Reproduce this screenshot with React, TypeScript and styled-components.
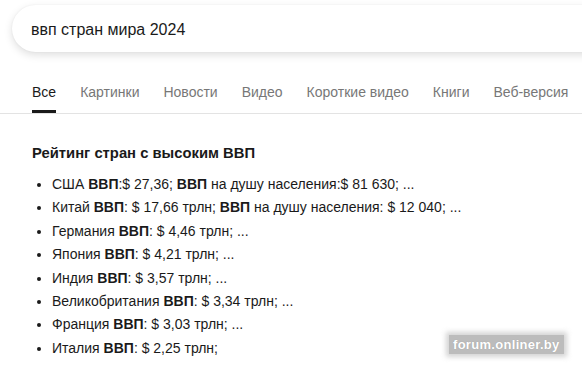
import React from 'react';
import styled, { createGlobalStyle } from 'styled-components';

const GlobalStyle = createGlobalStyle`
  html, body {
    margin: 0;
    padding: 0;
    background: #fff;
  }
  body {
    font-family: "Liberation Sans", Arial, sans-serif;
    color: #1a1a1a;
    overflow: hidden;
  }
`;

const Page = styled.div`
  position: relative;
  width: 582px;
  height: 366px;
  overflow: hidden;
  background: #fff;
`;

const SearchBar = styled.div`
  margin: 5px 0 0 12px;
  width: 640px;
  height: 47px;
  border-radius: 24px;
  background: #fff;
  box-shadow: 0 3px 8px rgba(0, 0, 0, 0.13), 0 0 2px rgba(0, 0, 0, 0.06);
  display: flex;
  align-items: center;
  padding: 3px 0 0 19px;
  box-sizing: border-box;
  font-size: 16px;
  color: #1a1a1a;
`;

const Tabs = styled.nav`
  margin-top: 27px;
  display: flex;
  gap: 24px;
  padding-left: 32px;
  border-bottom: 1px solid #e3e3e3;
`;

const Tab = styled.div<{ $active?: boolean }>`
  font-size: 14px;
  height: 34px;
  display: flex;
  align-items: flex-start;
  padding-top: 5px;
  box-sizing: border-box;
  color: ${p => (p.$active ? '#1a1a1a' : '#777')};
  border-bottom: 3px solid ${p => (p.$active ? '#1a1a1a' : 'transparent')};
  white-space: nowrap;
`;

const Content = styled.section`
  padding: 31px 0 0 32px;
`;

const Heading = styled.h3`
  margin: 0 0 12px;
  font-size: 14.8px;
  font-weight: 700;
  line-height: 16px;
`;

const List = styled.ul`
  margin: 0;
  padding-left: 20px;
  list-style: disc;
`;

const Item = styled.li`
  font-size: 14px;
  line-height: 23.4px;

  b {
    font-weight: 700;
  }
`;

const Watermark = styled.div`
  position: absolute;
  left: 449px;
  top: 335px;
  padding: 2px 4px;
  font-size: 13px;
  font-weight: 700;
  color: #fff;
  background: rgba(160, 160, 160, 0.7);
  box-shadow: 0 0 5px 3px rgba(160, 160, 160, 0.45);
  letter-spacing: 0.3px;
  text-shadow: 0 0 1px rgba(0, 0, 0, 0.2);
`;

const tabs = ['Все', 'Картинки', 'Новости', 'Видео', 'Короткие видео', 'Книги', 'Веб-версия'];

const countries: { name: string; rest: React.ReactNode }[] = [
  { name: 'США', rest: <><b>ВВП</b>:$ 27,36; <b>ВВП</b> на душу населения:$ 81 630; ...</> },
  { name: 'Китай', rest: <><b>ВВП</b>: $ 17,66 трлн; <b>ВВП</b> на душу населения: $ 12 040; ...</> },
  { name: 'Германия', rest: <><b>ВВП</b>: $ 4,46 трлн; ...</> },
  { name: 'Япония', rest: <><b>ВВП</b>: $ 4,21 трлн; ...</> },
  { name: 'Индия', rest: <><b>ВВП</b>: $ 3,57 трлн; ...</> },
  { name: 'Великобритания', rest: <><b>ВВП</b>: $ 3,34 трлн; ...</> },
  { name: 'Франция', rest: <><b>ВВП</b>: $ 3,03 трлн; ...</> },
  { name: 'Италия', rest: <><b>ВВП</b>: $ 2,25 трлн;</> },
];

export default function App() {
  return (
    <Page>
      <GlobalStyle />
      <SearchBar>ввп стран мира 2024</SearchBar>
      <Tabs>
        {tabs.map((t, i) => (
          <Tab key={t} $active={i === 0}>{t}</Tab>
        ))}
      </Tabs>
      <Content>
        <Heading>Рейтинг стран с высоким ВВП</Heading>
        <List>
          {countries.map(c => (
            <Item key={c.name}>
              {c.name} {c.rest}
            </Item>
          ))}
        </List>
      </Content>
      <Watermark>forum.onliner.by</Watermark>
    </Page>
  );
}
